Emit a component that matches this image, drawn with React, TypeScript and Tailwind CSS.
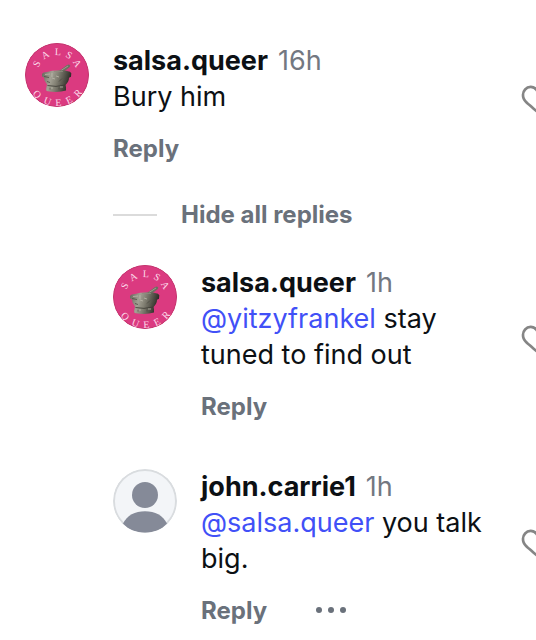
import type { ReactNode } from 'react';

const topLetters = [
  { char: 'S', angle: -61 },
  { char: 'A', angle: -30 },
  { char: 'L', angle: 2 },
  { char: 'S', angle: 31 },
  { char: 'A', angle: 60 },
];

const bottomLetters = [
  { char: 'Q', angle: 46 },
  { char: 'U', angle: 20 },
  { char: 'E', angle: -3 },
  { char: 'E', angle: -26 },
  { char: 'R', angle: -49 },
];

const SalsaAvatar = () => {
  return (
    <svg viewBox="0 0 64 64" className="size-16 shrink-0 rounded-full" role="img" aria-label="salsa.queer">
      <defs>
        <linearGradient id="stone" x1="0" x2="1" y1="0" y2="0.2">
          <stop offset="0" stopColor="#66645a" />
          <stop offset="0.35" stopColor="#a3a194" />
          <stop offset="0.55" stopColor="#858376" />
          <stop offset="0.8" stopColor="#55534a" />
          <stop offset="1" stopColor="#2c2b26" />
        </linearGradient>
      </defs>
      <circle cx="32" cy="32" r="32" fill="#db3a80" />
      <circle cx="32" cy="32" r="31.5" fill="none" stroke="#c2396f" />
      <g fill="#fbdbe9" fontSize="10" fontFamily="'Liberation Serif', serif" textAnchor="middle">
        {topLetters.map(({ char, angle }) => (
          <text key={angle} x="32" y="12" transform={`rotate(${angle} 32 32)`}>
            {char}
          </text>
        ))}
        {bottomLetters.map(({ char, angle }) => (
          <text key={angle} x="32" y="63" transform={`rotate(${angle} 32 32)`}>
            {char}
          </text>
        ))}
      </g>
      <path d="M32 29.500 42 22q2.200-1.200 3.200.5.300 1.300-1 2L37 30z" fill="#6f6e62" />
      <path d="M36 27.500 43 23" stroke="#aaa898" strokeWidth="0.8" />
      <path
        d="M17 31q1-2 5-2l5-1.200q8-1 14 0l4 1 1.300 1.500-.300 3.500-2 1q0 4-3.500 7.200l.500 2v3.500q-8 2.500-19.500.5l-.500-2 1-4.500-2.500-4-.500-3-2-1z"
        fill="url(#stone)"
      />
      <path d="M29 28.500h9" stroke="#8d8b7e" strokeWidth="0.8" />
      <path d="M22.500 42.500q8 2 18-.5" fill="none" stroke="#3b3a33" strokeWidth="0.8" />
      <path d="M20 31.500l5-.500m2 4 3 1m1-3 3 1m-10 11h4m-1-15v4m8 10h3" stroke="#bab8a9" strokeWidth="0.8" />
      <path d="M19 33.500l5 1m-2 4 3 1m9-1 3-3m2 3 3-3m-17 9v2m9-2v2" stroke="#4c4b42" strokeWidth="0.8" />
    </svg>
  );
};

const DefaultAvatar = () => {
  return (
    <svg viewBox="0 0 64 64" className="size-16 shrink-0 rounded-full" role="img" aria-label="john.carrie1">
      <circle cx="32" cy="32" r="32" fill="#f3f5f8" />
      <circle cx="32" cy="32" r="31" fill="none" stroke="#d9dcdf" strokeWidth="2" />
      <circle cx="32" cy="26" r="13" fill="#858a98" />
      <path d="M10 54.500C14 46.500 22 42.300 32 42.300s18 4.200 22 12.200C48 61 41 63.500 32 63.500s-16-2.500-22-9z" fill="#858a98" />
    </svg>
  );
};

const LikeButton = () => {
  return (
    <button aria-label="Like" className="-mr-[17px] mb-3 shrink-0 self-center">
      <svg viewBox="0 0 24 24" className="size-8" fill="#858585">
        <path d="M16.792 3.904A4.989 4.989 0 0 1 21.500 9.122c0 3.072-2.652 4.959-5.197 7.222-2.512 2.243-3.865 3.469-4.303 3.752-.477-.309-2.143-1.823-4.303-3.752C5.141 14.072 2.500 12.167 2.500 9.122a4.989 4.989 0 0 1 4.708-5.218 4.210 4.210 0 0 1 3.675 1.941c.840 1.175.980 1.763 1.120 1.763s.278-.588 1.110-1.766a4.170 4.170 0 0 1 3.679-1.938m0-2a6.040 6.040 0 0 0-4.797 2.127 6.052 6.052 0 0 0-4.787-2.127A6.985 6.985 0 0 0 .500 9.122c0 3.610 2.550 5.827 5.015 7.970.283.246.569.494.853.747l1.027.918a44.998 44.998 0 0 0 3.518 3.018 2 2 0 0 0 2.174 0 45.263 45.263 0 0 0 3.626-3.115l.922-.824c.293-.260.590-.519.885-.774 2.334-2.025 4.980-4.320 4.980-7.940a6.985 6.985 0 0 0-6.708-7.218Z" />
      </svg>
    </button>
  );
};

type CommentProps = {
  avatar: ReactNode;
  name: string;
  time: string;
  children: ReactNode;
  hasMenu?: boolean;
};

const Comment = ({ avatar, name, time, children, hasMenu }: CommentProps) => {
  return (
    <article className="flex">
      {avatar}
      <div className="ml-6 mr-6 min-w-0 flex-1">
        <div className="flex gap-[10px]">
          <a href="#" className="font-bold">
            {name}
          </a>
          <time className="text-[#737881]">{time}</time>
        </div>
        <p>{children}</p>
        <div className="mt-4 flex items-center gap-12 text-2xl/9 font-bold text-[#6a717b]">
          <button>Reply</button>
          {hasMenu && (
            <button aria-label="More options">
              <svg viewBox="0 0 32 8" className="h-2 w-8" fill="currentColor">
                <circle cx="4" cy="3" r="3" />
                <circle cx="16" cy="3" r="3" />
                <circle cx="28" cy="3" r="3" />
              </svg>
            </button>
          )}
        </div>
      </div>
      <LikeButton />
    </article>
  );
};

const Mention = ({ children }: { children: ReactNode }) => {
  return (
    <a href="#" className="text-[#4150f7]">
      {children}
    </a>
  );
};

export default function App() {
  return (
    <main className="overflow-hidden bg-white pl-[25px] pt-[43px] font-['Inter',sans-serif] text-[27px]/9 text-[#0c1014]">
      <Comment avatar={<SalsaAvatar />} name="salsa.queer" time="16h">
        Bury him
      </Comment>
      <div className="pl-[88px] pt-[30px]">
        <button className="flex items-center gap-6 text-2xl/9 font-bold text-[#6a717b]">
          <span className="h-0.5 w-11 bg-[#dbdbdb]" />
          Hide all replies
        </button>
        <div className="mt-8 flex flex-col gap-11">
          <Comment avatar={<SalsaAvatar />} name="salsa.queer" time="1h">
            <Mention>@yitzyfrankel</Mention> stay tuned to find out
          </Comment>
          <Comment avatar={<DefaultAvatar />} name="john.carrie1" time="1h" hasMenu>
            <Mention>@salsa.queer</Mention> you talk big.
          </Comment>
        </div>
      </div>
    </main>
  );
}
